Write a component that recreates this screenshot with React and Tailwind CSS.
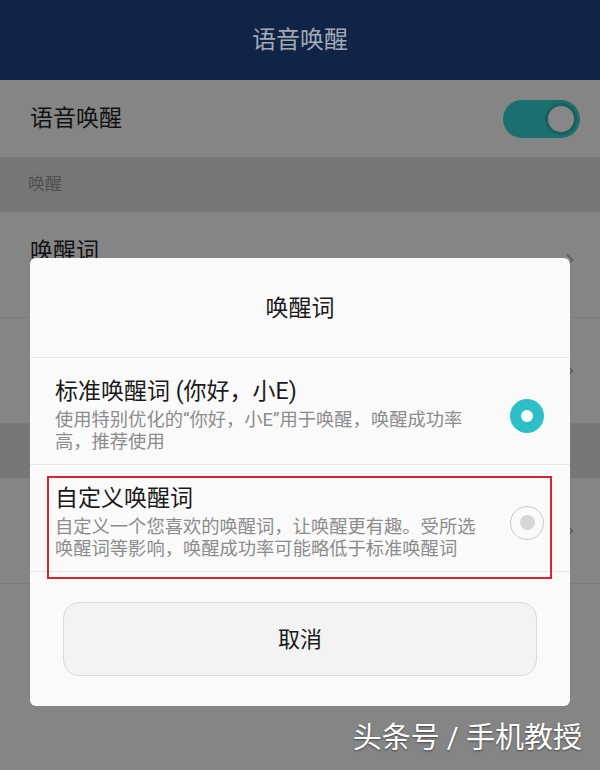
import { ChevronRight } from 'lucide-react';

const font = { fontFamily: 'Roboto, "Noto Sans CJK SC", sans-serif' };

function Row({ title, className = '', children }) {
  return (
    <div className={`flex justify-between border-b border-[#7b7b7b] bg-[#858585] pl-[30px] pr-[20px] ${className}`}>
      <div className="text-[23px] leading-[28px] text-[#111]">{title}</div>
      {children}
    </div>
  );
}

function Option({ title, lines, selected, marked }) {
  return (
    <div className="relative flex items-center justify-between border-b border-[#e7e7e7] pl-[25px] pr-[26px] pt-[20px] pb-[11px]">
      <div>
        <div className="text-[23px] leading-[28px] text-[#1a1a1a]">{title}</div>
        <div className="mt-[3px] text-[18.3px] leading-[22px] text-[#8c8c8c]">
          {lines.map((l) => (
            <div key={l} className="whitespace-nowrap">{l}</div>
          ))}
        </div>
      </div>
      {selected ? (
        <div className="flex h-[34px] w-[34px] items-center justify-center rounded-full bg-[#2cbfca]">
          <div className="h-[12px] w-[12px] rounded-full bg-white" />
        </div>
      ) : (
        <div className="flex h-[34px] w-[34px] items-center justify-center rounded-full border border-[#c9c9c9]">
          <div className="h-[15px] w-[15px] rounded-full bg-[#d6d6d6]" />
        </div>
      )}
      {marked && (
        <div className="absolute left-[17px] top-[11px] h-[103px] w-[505px] border-2 border-[#d6262c]" />
      )}
    </div>
  );
}

export default function App() {
  return (
    <div className="relative h-[770px] w-[600px] overflow-hidden bg-[#858585]" style={font}>
      <div className="flex h-[80px] items-center justify-center bg-[#0f2447] text-[24px] text-[#a3aab4]">
        语音唤醒
      </div>

      <Row title="语音唤醒" className="h-[78px] items-center">
        <div className="flex h-[38px] w-[77px] items-center justify-end rounded-full bg-[#19706f] pr-[3px]">
          <div className="h-[32px] w-[32px] rounded-full border-[3px] border-[#1d5f60] bg-[#878787]" />
        </div>
      </Row>

      <div className="flex h-[54px] items-center bg-[#777777] pl-[28px] text-[17px] text-[#4f4f4f]">唤醒</div>

      <Row title="唤醒词" className="h-[106px] pt-[26px]">
        <ChevronRight size={20} className="mt-[12px] text-[#5a5a5a]" />
      </Row>
      <Row title="" className="h-[106px] items-center">
        <ChevronRight size={20} className="text-[#5a5a5a]" />
      </Row>
      <div className="h-[54px] bg-[#777777]" />
      <Row title="" className="h-[106px] items-center">
        <ChevronRight size={20} className="text-[#5a5a5a]" />
      </Row>

      {/* dialog */}
      <div className="absolute left-[30px] top-[258px] w-[540px] rounded-[6px] bg-[#fafafa]">
        <div className="flex h-[100px] items-center justify-center border-b border-[#e7e7e7] pt-[4px] text-[23px] text-[#1a1a1a]">
          唤醒词
        </div>
        <Option
          title="标准唤醒词 (你好，小E)"
          lines={['使用特别优化的“你好，小E”用于唤醒，唤醒成功率', '高，推荐使用']}
          selected
        />
        <Option
          title="自定义唤醒词"
          lines={['自定义一个您喜欢的唤醒词，让唤醒更有趣。受所选', '唤醒词等影响，唤醒成功率可能略低于标准唤醒词']}
          marked
        />
        <div className="px-[33px] pt-[30px] pb-[30px]">
          <button className="flex h-[74px] w-full items-center justify-center rounded-[16px] border border-[#dadada] bg-[#f3f3f3] text-[22px] text-[#1a1a1a]">
            取消
          </button>
        </div>
      </div>

      <div className="absolute bottom-[10px] right-[18px] text-[29px] text-white [text-shadow:0_1px_2px_rgba(0,0,0,0.5)]">
        头条号 / 手机教授
      </div>
    </div>
  );
}
